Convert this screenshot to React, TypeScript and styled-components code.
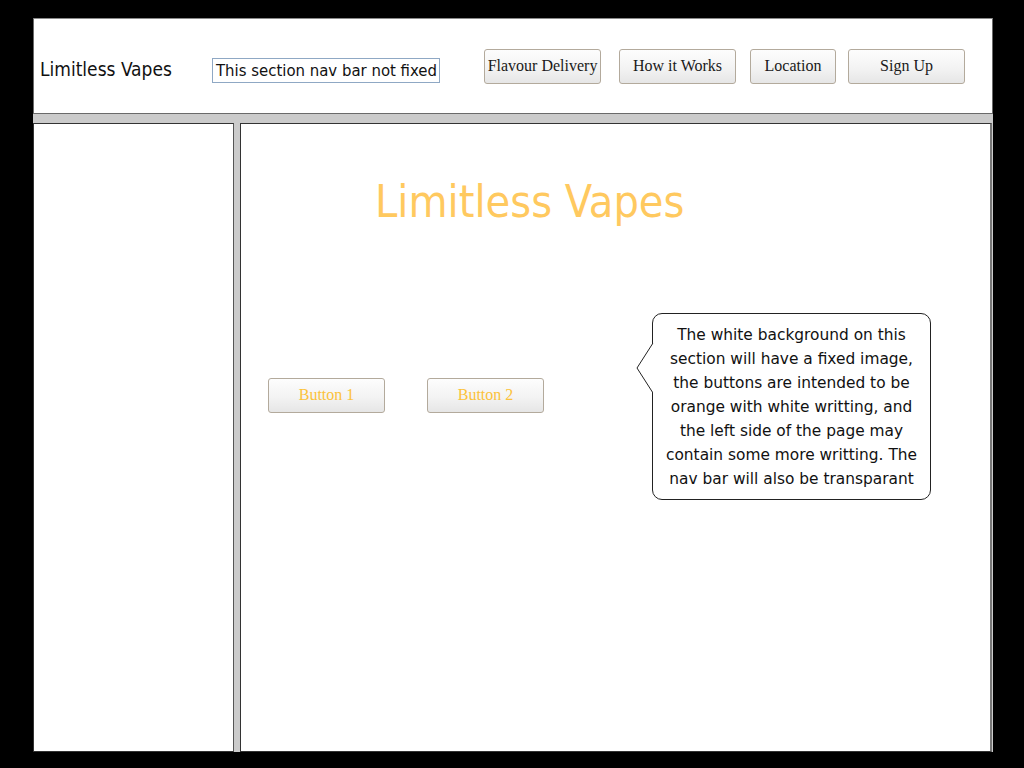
import React from "react";
import styled, { createGlobalStyle } from "styled-components";

const Global = createGlobalStyle`
  html, body { margin: 0; padding: 0; background: #000; }
  body { width: 1024px; height: 768px; overflow: hidden; }
`;

const Frame = styled.div`
  padding: 18px 0 0 33px;
  width: 960px;
`;

const Header = styled.header`
  box-sizing: border-box;
  height: 96px;
  background: #fff;
  border: 1px solid #6a6a6a;
  border-top-color: #8a8a8a;
  display: flex;
  align-items: center;
  padding-left: 6px;
`;

const Logo = styled.div`
  font-family: "DejaVu Sans Condensed", "DejaVu Sans", sans-serif;
  font-size: 19px;
  color: #111;
  margin-top: 6px;
  width: 172px;
`;

const NoteBox = styled.div`
  box-sizing: border-box;
  width: 228px;
  height: 25px;
  border: 1px solid #8fa8c4;
  font-family: "DejaVu Sans Condensed", "DejaVu Sans", sans-serif;
  font-size: 16.6px;
  line-height: 23px;
  color: #111;
  padding-left: 3px;
  white-space: nowrap;
  overflow: hidden;
  margin-top: 8px;
`;

const Nav = styled.nav`
  display: flex;
  margin-left: 44px;
  margin-top: 1px;
`;

const Btn = styled.button<{ $w: number; $gap?: number; $orange?: boolean }>`
  box-sizing: border-box;
  width: ${(p) => p.$w}px;
  height: 35px;
  margin-left: ${(p) => p.$gap ?? 0}px;
  padding: 0 0 1px;
  border: 1px solid #b3aa9c;
  border-radius: 3px;
  background: linear-gradient(#fdfdfd 0%, #f3f3f3 55%, #e6e6e6 100%);
  font-family: "Liberation Serif", "Times New Roman", serif;
  font-size: 16px;
  color: ${(p) => (p.$orange ? "#fcc23a" : "#1a1a1a")};
  cursor: pointer;
`;

const Body = styled.div`
  display: flex;
  background: #cbcbcb;
  padding-top: 9px;
  box-sizing: border-box;
  height: 638px;
`;

const Side = styled.aside`
  box-sizing: border-box;
  width: 201px;
  height: 629px;
  background: #fff;
  border: 1px solid #333;
  border-right-color: #555;
`;

const Main = styled.main`
  box-sizing: border-box;
  position: relative;
  width: 752px;
  height: 629px;
  margin-left: 6px;
  background: #fff;
  border: 1px solid #333;
  border-right: 2px solid #777;
  padding: 48px 0 0 27px;
`;

const Title = styled.h1`
  margin: 0 0 0 107px;
  font-family: "DejaVu Sans Condensed", "DejaVu Sans", sans-serif;
  font-weight: normal;
  font-size: 44.6px;
  line-height: 60px;
  color: #ffc95f;
`;

const Row = styled.div`
  display: flex;
  align-items: flex-start;
  margin-top: 81px;
`;

const Buttons = styled.div`
  display: flex;
  margin-top: 65px;
`;

const Callout = styled.div`
  position: relative;
  box-sizing: border-box;
  width: 279px;
  height: 187px;
  margin-left: 108px;
  border: 1px solid #222;
  border-radius: 10px;
  background: #fff;
  padding-top: 9px;
  font-family: "DejaVu Sans", sans-serif;
  font-size: 15.4px;
  line-height: 24px;
  text-align: center;
  color: #111;
  white-space: nowrap;
`;

const Pointer = styled.svg`
  position: absolute;
  left: -17px;
  top: 29px;
`;

export default function App() {
  return (
    <>
      <Global />
      <Frame>
        <Header>
          <Logo>Limitless Vapes</Logo>
          <NoteBox>This section nav bar not fixed</NoteBox>
          <Nav>
            <Btn $w={117}>Flavour Delivery</Btn>
            <Btn $w={117} $gap={18}>How it Works</Btn>
            <Btn $w={86} $gap={14}>Location</Btn>
            <Btn $w={117} $gap={12}>Sign Up</Btn>
          </Nav>
        </Header>
        <Body>
          <Side />
          <Main>
            <Title>Limitless Vapes</Title>
            <Row>
              <Buttons>
                <Btn $w={117} $orange>Button 1</Btn>
                <Btn $w={117} $gap={42} $orange>Button 2</Btn>
              </Buttons>
              <Callout>
                <Pointer width="18" height="52" viewBox="0 0 18 52">
                  <polyline points="17,0 1,25 17,50" fill="#fff" stroke="#222" strokeWidth="1" />
                  <rect x="17" y="0.5" width="2" height="50" fill="#fff" />
                </Pointer>
                The white background on this
                <br />
                section will have a fixed image,
                <br />
                the buttons are intended to be
                <br />
                orange with white writting, and
                <br />
                the left side of the page may
                <br />
                contain some more writting. The
                <br />
                nav bar will also be transparant
              </Callout>
            </Row>
          </Main>
        </Body>
      </Frame>
    </>
  );
}
